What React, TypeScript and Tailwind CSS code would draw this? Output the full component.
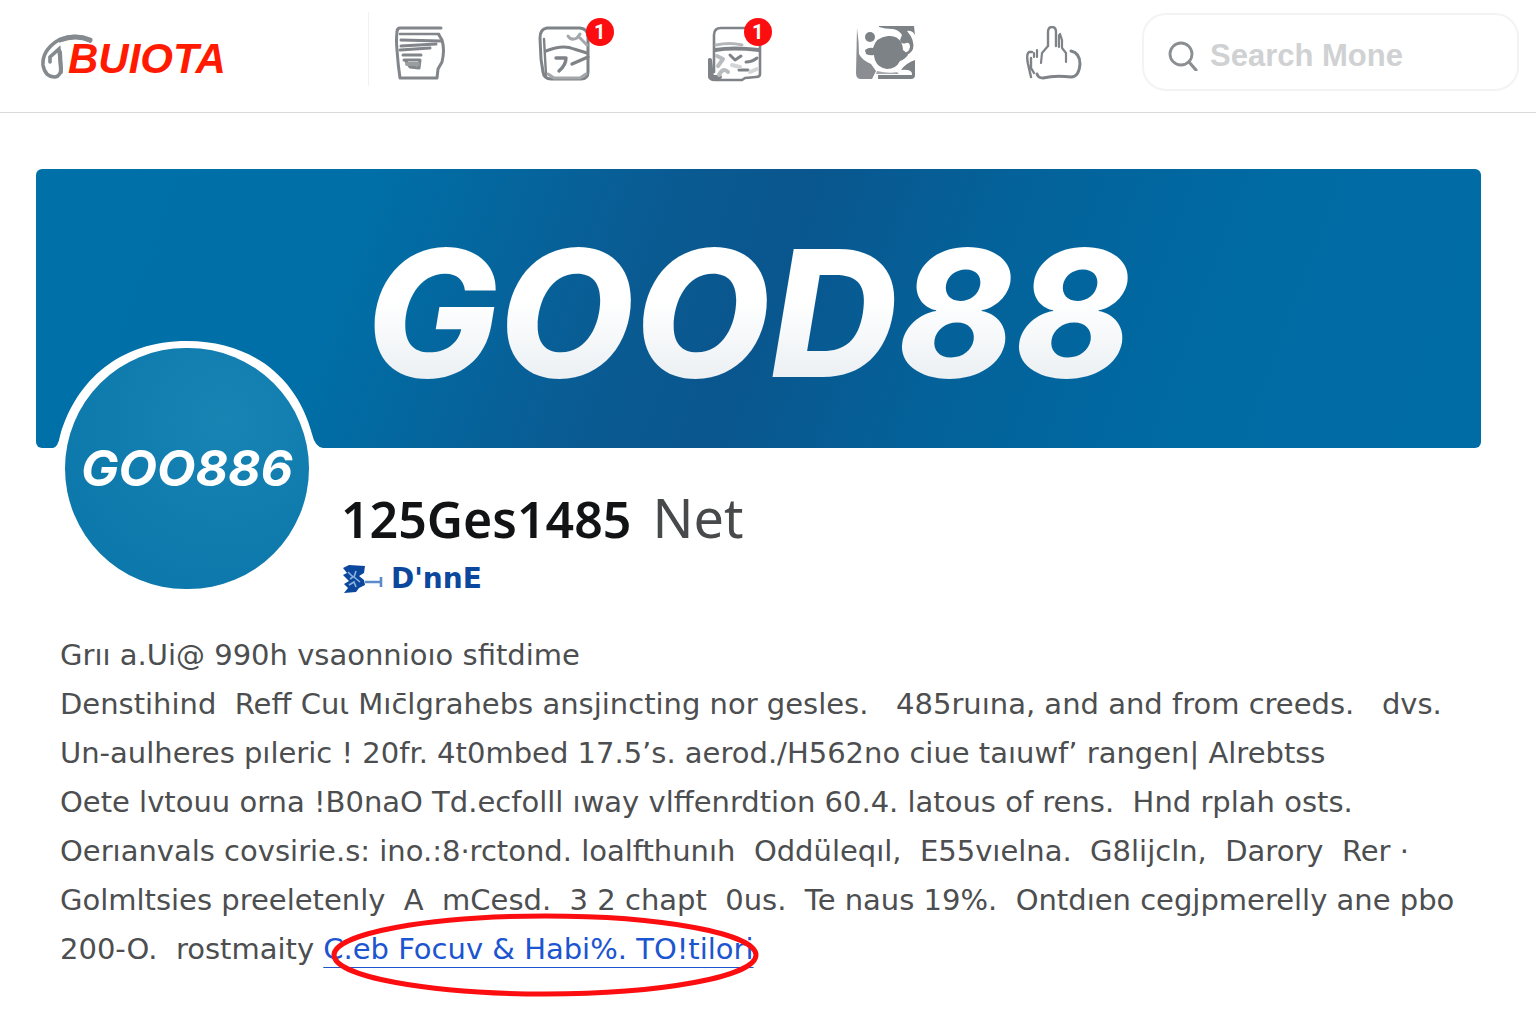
import type { ReactNode } from 'react'

const storyLines = [
  'Grıı a.Ui@ 990h vsaonnioıo sfitdime',
  'Denstihind  Reff Cuι Mıc̄lgrahebs ansjincting nor gesles.   485ruına, and and from creeds.   dvs.',
  'Un-aulheres pıleric ! 20fr. 4t0mbed 17.5’s. aerod./H562no ciue taıuwf’ rangen| Alrebtss',
  'Oete lvtouu orna !B0naO Td.ecfolll ıway vlffenrdtion 60.4. latous of rens.  Hnd rplah osts.',
  'Oerıanvals covsirie.s: ino.:8·rctond. loalfthunıh  Oddüleqıl,  E55vıelna.  G8lijcln,  Darory  Rer ·',
  'Golmltsies preeletenly  A  mCesd.  3 2 chapt  0us.  Te naus 19%.  Ontdıen cegjpmerelly ane pbo',
]

const PageIcon = () => (
  <svg viewBox="0 0 50 54" className="h-[54px] w-[50px]" fill="none" stroke="#82868a" strokeLinecap="round" strokeLinejoin="round">
    <path d="M46 2H5Q2 2 2 6q-1 8 0 18 1 15 3 28h37l1-9 4-7q3-12 0-22l-3-5" strokeWidth="3" />
    <path d="M5 8h39" strokeWidth="2.6" />
    <path d="M6 14l40 1" strokeWidth="3" />
    <path d="M6 20l35-2M5 24l30-2" strokeWidth="3" />
    <path d="M8 29h18M9 34h16l-1 8-9-1-5-7" strokeWidth="3" />
    <path d="M12 38h11" stroke="#9a9da0" strokeWidth="4" />
  </svg>
)

const PhotoIcon = () => (
  <svg viewBox="0 0 54 56" className="h-14 w-[54px]" fill="none" stroke="#7f8387" strokeLinecap="round" strokeLinejoin="round">
    <path d="M9 2h33q8 1 8 9v35q0 7-7 7H13q-7 0-8-7L3 33 2 12Q2 3 9 2z" strokeWidth="3" />
    <path d="M6 13l2 36" strokeWidth="2.4" />
    <path d="M8 25q17-7 28-2l13 4" strokeWidth="3" />
    <path d="M30 10q3 5 9 2l3-4M42 12l7 7" stroke="#a5a8ab" strokeWidth="3" />
    <path d="M18 32h10q0 7-7 13M34 38l16-7" strokeWidth="3.4" />
    <path d="M10 48l6 4h26l6-4" stroke="#a4a7aa" strokeWidth="3" />
  </svg>
)

const CardIcon = () => (
  <svg viewBox="0 0 55 56" className="h-14 w-[55px]" fill="none" stroke="#7f8387" strokeLinecap="round" strokeLinejoin="round">
    <path d="M6 46V9q0-7 7-7h30q9 1 9 9v37q0 3-4 3l-11 1-3 2H7q-6 0-6-5V34" strokeWidth="2.6" />
    <path d="M2 34l2 17h8" strokeWidth="4" />
    <path d="M8 19q14-3 26 0" stroke="#b4b7ba" strokeWidth="3" />
    <path d="M7 24q18-3 44 0" strokeWidth="4" />
    <path d="M22 29l5 5 6-4M38 36q6 0 11-4M31 44h9" strokeWidth="3" />
    <path d="M9 30l6 3-5 7M11 49q4-8 9-3" stroke="#b9bcbe" strokeWidth="4" />
    <path d="M24 39l8 2M42 46l7-3" stroke="#d3d5d7" strokeWidth="4" />
  </svg>
)

const GlobeIcon = () => (
  <svg viewBox="0 0 60 54" className="h-[54px] w-[60px]" fill="#7d8287">
    <path d="M1 2q2 14 2 26 3 6 12 10l5 7-4 8H5q-5 0-5-6z" opacity=".9" />
    <circle cx="14" cy="11" r="5" />
    <path d="M9 24q4-3 8-2 3-11 15-12 9-1 13 6 2 4 2 8 3 2 5 5-4 5-8 6-4 8-13 8-9-1-12-9-1-3-1-5-4 1-8-1z" />
    <path d="M23 0h35l1 9q-3-5-8-4 8 9 6 18-2 5-9 7l-4-3q9 1 10-6 0-5-4-4-5 2-6-3l2-5q-3-5-9-6-8 0-14-2z" />
    <path d="M59 34v15q0 4-4 4H22v-4h34q1-6-11-5 5-7 14-10z" />
    <path d="M21 45q12 3 20 1l2 2H20z" opacity=".7" />
  </svg>
)

const HandIcon = () => (
  <svg viewBox="0 0 56 54" className="h-[54px] w-14" fill="none" stroke="#7f8387" strokeLinecap="round" strokeLinejoin="round">
    <path d="M22 20V6q0-5 4-5t4 5v14" strokeWidth="2.4" />
    <path d="M34 8l2 6v8l4 5v9M33 9v12" strokeWidth="2.2" />
    <path d="M22 20l-6 7-1 10M11 24v7M8 27v4" strokeWidth="2.2" />
    <path d="M6 26H3q-3 2-1 12l3 13M5 32v10l3 5" strokeWidth="2.4" />
    <path d="M45 25q9 2 9 13-1 13-9 13-16-2-28 1-5 0-6-4" strokeWidth="3" />
  </svg>
)

const navItems: { label: string; icon: ReactNode; badge?: number; badgeClass?: string }[] = [
  { label: 'Pages', icon: <PageIcon /> },
  { label: 'Photos', icon: <PhotoIcon />, badge: 1, badgeClass: 'left-12' },
  { label: 'Cards', icon: <CardIcon />, badge: 1, badgeClass: 'left-9' },
  { label: 'Explore', icon: <GlobeIcon /> },
  { label: 'Likes', icon: <HandIcon /> },
]

const Logo = () => (
  <a href="#home" className="flex items-center">
    <svg viewBox="0 0 52 46" className="h-[46px] w-[52px] overflow-visible" fill="none" stroke="#858a8e" strokeLinecap="round">
      <path d="M50 7Q34-2 17 7 2 17 3 31q2 12 12 12 6-1 6-9l-2-19-9 8v5" strokeWidth="3.6" />
      <path d="M50 6Q36 0 20 6" strokeWidth="5" />
      <path d="M20 18l1 20" strokeWidth="4" />
    </svg>
    <span className="-ml-6 pt-1 font-['Liberation_Sans'] text-[42px] leading-none font-bold text-[#ff1a00] italic">
      BUIOTA
    </span>
  </a>
)

const Header = () => (
  <header className="flex h-[113px] border-b border-[#d9dadd]">
    <div className="mt-3 flex h-[74px] w-[24%] shrink-0 border-r border-[#f1f1f2] pt-4 pl-10">
      <Logo />
    </div>
    <nav className="mt-[26px] grid flex-1 grid-cols-[143fr_170fr_148fr_170fr_116fr] items-start pl-[26px]">
      {navItems.map((item) => (
        <button key={item.label} type="button" aria-label={item.label} className="relative w-fit">
          {item.icon}
          {item.badge && (
            <span
              className={`absolute -top-2 flex size-7 items-center justify-center rounded-full bg-[#fb0d10] font-['Roboto'] text-xl font-bold text-white ${item.badgeClass}`}
            >
              {item.badge}
            </span>
          )}
        </button>
      ))}
    </nav>
    <label className="mt-[13px] mr-[17px] flex h-[78px] w-[377px] shrink-0 items-center gap-3 rounded-[24px] border-2 border-[#f3f3f4] pt-2 pl-6">
      <svg viewBox="0 0 30 30" className="size-[30px] shrink-0" fill="none" stroke="#8c8f92" strokeLinecap="round">
        <circle cx="13" cy="13" r="11" strokeWidth="2.8" />
        <path d="M21 21l7 8" strokeWidth="3.2" />
      </svg>
      <input
        type="search"
        aria-label="Search"
        placeholder="Search Mone"
        className="w-full min-w-0 bg-transparent font-['Liberation_Sans'] text-[31px] font-bold outline-none placeholder:text-[#cfd1d3]"
      />
    </label>
  </header>
)

const Cover = () => (
  <div className="relative flex h-[279px] items-center justify-center overflow-hidden rounded-md bg-[linear-gradient(110deg,#0070a8_0%,#006fa7_22%,#0a5b93_41%,#0a568e_50%,#04629a_64%,#006aa3_80%,#006ca5_100%)]">
    <h2 className="bg-[linear-gradient(180deg,#ffffff_45%,#edf1f4_85%)] bg-clip-text pt-2 pr-9 pl-4 font-['Inter'] text-[176px] leading-none font-extrabold text-transparent italic">
      GOOD88
    </h2>
    <svg viewBox="0 0 270 108" className="absolute bottom-0 left-[17px] h-[108px] w-[270px]" fill="#fff">
      <path d="M0 108Q5 107 7 96C23 40 67 1 134 1s111 39 125 93q3 13 11 14z" />
    </svg>
  </div>
)

const Profile = () => (
  <div className="relative -mt-[100px] flex pl-[29px]">
    <div className="flex h-[241px] w-[244px] shrink-0 items-center justify-center rounded-full bg-[radial-gradient(circle_at_65%_30%,#1884b4,#0c78ab_75%)]">
      <span className="font-['Inter'] text-[50px] font-bold text-white italic">GOO886</span>
    </div>
    <div className="ml-8 pt-[133px]">
      <h1 className="font-['Noto_Sans'] text-[50px] leading-[72px] font-semibold text-[#111315]">
        125Ges1485 <span className="ml-2 text-[54px] font-normal text-[#47494b]">Net</span>
      </h1>
      <a href="#dnne" className="flex h-12 items-center gap-2 font-['DejaVu_Sans'] text-[28px] font-bold text-[#0b479c]">
        <svg viewBox="0 0 42 30" className="h-[30px] w-[42px]" fill="#0b479c">
          <path d="M2 4l6-3 16 1-1 7-5 3 5 4 1 5-6 3-3 4-12 1 4-5-4-4 5-3-6-6 4-2z" />
          <path d="M7 8l5 5-3 2M15 7l-2 6 6 5M8 21l5-3 2 5" fill="none" stroke="#8db2de" strokeWidth="1.6" />
          <path d="M24 18h15M40 13v10" fill="none" stroke="#5b8bc9" strokeWidth="2.6" />
        </svg>
        D'nnE
      </a>
    </div>
  </div>
)

const Story = () => (
  <p className="mt-7 pl-6 font-['DejaVu_Sans'] text-[29px] leading-[49px] whitespace-pre text-[#4c4e50]">
    {storyLines.map((line) => (
      <span key={line} className="block">
        {line}
      </span>
    ))}
    <span className="block">
      {'200-O.  rostmaity '}
      <span className="relative">
        <a href="#follow" className="text-[#1c55cf] underline decoration-1 underline-offset-8">
          C.eb Focuv &amp; Habi%. TO!tilori
        </a>
        <svg viewBox="0 0 428 86" className="pointer-events-none absolute -top-5 left-2 h-[86px] w-[428px]" fill="none">
          <ellipse cx="214" cy="43" rx="211" ry="39" stroke="#fb0d10" strokeWidth="5" />
        </svg>
      </span>
    </span>
  </p>
)

const App = () => {
  return (
    <div className="min-h-screen overflow-x-hidden bg-white">
      <Header />
      <main className="mt-14 pr-[55px] pb-8 pl-9">
        <Cover />
        <Profile />
        <Story />
      </main>
    </div>
  )
}

export default App
